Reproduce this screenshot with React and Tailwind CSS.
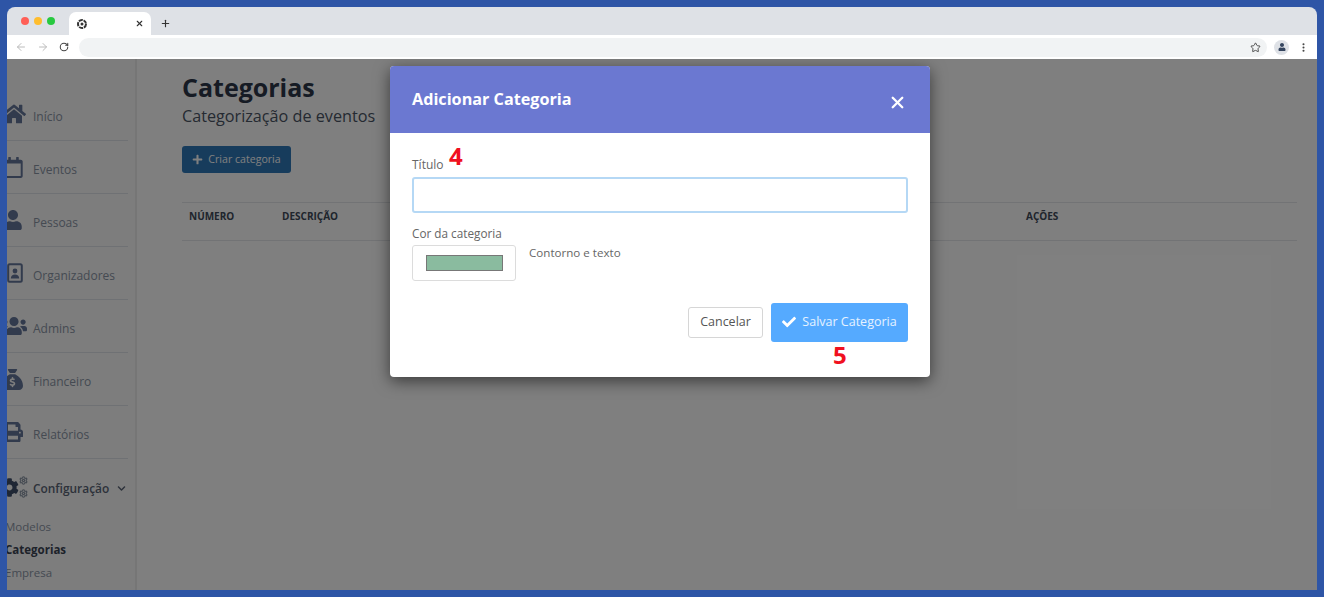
import React from "react";
import { FaHome, FaRegCalendar, FaUser, FaUsers, FaPrint, FaCog, FaPlus, FaCheck, FaChevronDown } from "react-icons/fa";
import { FaSackDollar } from "react-icons/fa6";
import { ArrowLeft, ArrowRight, RotateCw, Star, X, Plus, MoreVertical, Settings } from "lucide-react";

const font = { fontFamily: '"Open Sans", sans-serif' };

function ContactIcon({ className }) {
  return (
    <svg viewBox="0 0 16 20" className={className} fill="none">
      <rect x="1.2" y="1.2" width="13.6" height="17.6" rx="1.5" stroke="currentColor" strokeWidth="2" />
      <circle cx="8" cy="8" r="2.4" fill="currentColor" />
      <path d="M3.8 15.5c0-2.6 1.8-4 4.2-4s4.200 1.400 4.200 4z" fill="currentColor" />
    </svg>
  );
}

const items = [
  { label: "Início", Icon: FaHome, size: "w-[24px] h-[24px]", ml: "-ml-[5px]" },
  { label: "Eventos", Icon: FaRegCalendar, size: "w-[21px] h-[21px]", ml: "-ml-[4px]" },
  { label: "Pessoas", Icon: FaUser, size: "w-[20px] h-[20px]", ml: "-ml-[4px]" },
  { label: "Organizadores", Icon: ContactIcon, size: "w-[16px] h-[20px]", ml: "ml-[0px]" },
  { label: "Admins", Icon: FaUsers, size: "w-[26px] h-[22px]", ml: "-ml-[6px]" },
  { label: "Financeiro", Icon: FaSackDollar, size: "w-[21px] h-[21px]", ml: "-ml-[5px]" },
  { label: "Relatórios", Icon: FaPrint, size: "w-[20px] h-[20px]", ml: "-ml-[4px]" },
];

function Sidebar() {
  return (
    <aside className="w-[130px] shrink-0 bg-[#fafafa] border-r-2 border-[#ececec] pt-[29px] overflow-hidden">
      {items.map(({ label, Icon, size, ml }) => (
        <div key={label} className="h-[53px] border-b border-[#dfe3e8] mr-[7px] flex items-center text-[#64769a]">
          <span className="w-[26px] shrink-0 flex items-center"><Icon className={`${size} ${ml} shrink-0`} /></span>
          <span className="mt-[5px] text-[12px] text-[#8a95a5]">{label}</span>
        </div>
      ))}
      <div className="h-[56px] flex items-center text-[#3f4f6b]">
        <span className="relative w-[26px] h-[24px] shrink-0">
          <FaCog className="absolute -left-[7px] top-[3px] w-[19px] h-[19px]" />
          <Settings className="absolute left-[12px] top-[1px] w-[9px] h-[9px] text-[#8a95a5]" strokeWidth={3} />
          <Settings className="absolute left-[12px] top-[14px] w-[9px] h-[9px] text-[#8a95a5]" strokeWidth={3} />
        </span>
        <span className="mt-[3px] text-[11.9px] font-semibold text-[#5a6576]">Configuração</span>
        <FaChevronDown className="mt-[3px] w-[9px] h-[9px] ml-[8px] text-[#5a6576]" />
      </div>
      <ul className="-ml-[2px] text-[11.5px]">
        <li className="h-[23px] leading-[23px] text-[#8a95a5]">Modelos</li>
        <li className="h-[23px] leading-[23px] font-bold text-[#3a4454]">Categorias</li>
        <li className="h-[23px] leading-[23px] text-[#8a95a5]">Empresa</li>
      </ul>
    </aside>
  );
}

function MainArea() {
  return (
    <main className="flex-1 bg-white pl-[45px] pr-[20px] pt-[11px]">
      <h1 className="text-[25px] leading-[34px] font-bold text-[#2c3648]">Categorias</h1>
      <p className="text-[16.2px] leading-[24px] text-[#4a5464]">Categorização de eventos</p>
      <button className="mt-[18px] w-[109px] h-[27px] rounded-[3px] bg-[#2f78b8] text-white text-[10.6px] flex items-center justify-center gap-[5px]">
        <FaPlus className="w-[11px] h-[11px]" />
        Criar categoria
      </button>
      <div className="mt-[29px] h-[39px] border-y border-[#e5e7eb] grid grid-cols-[93px_744px_1fr] items-start pt-[6px] pl-[7px] text-[10px] font-bold text-[#3f4a5a]">
        <span>NÚMERO</span>
        <span>DESCRIÇÃO</span>
        <span>AÇÕES</span>
      </div>
    </main>
  );
}

function Modal() {
  return (
    <div className="absolute left-[383px] top-[7px] w-[540px] h-[311px] bg-white rounded-[4px] shadow-[0_4px_16px_rgba(0,0,0,0.55)] overflow-hidden">
      <div className="h-[67px] bg-[#6b78d1] flex items-center justify-between pl-[22px] pr-[23px]">
        <h2 className="text-[16.2px] font-bold text-white">Adicionar Categoria</h2>
        <X className="w-[19px] h-[19px] text-white mt-[6px]" strokeWidth={3} />
      </div>
      <div className="relative px-[22px] pt-[23px]">
        <label className="block text-[12px] leading-[18px] text-[#666]">Título</label>
        <span className="absolute left-[59px] top-[7px] text-[24px] leading-[32px] font-bold text-[#f01020]">4</span>
        <div className="mt-[3px] h-[36px] rounded-[3px] border-2 border-[#b5d8f5] bg-white" />
        <label className="block mt-[11px] text-[11.75px] leading-[18px] text-[#666]">Cor da categoria</label>
        <div className="flex mt-[3px]">
          <div className="w-[104px] h-[36px] rounded-[3px] border border-[#dcdcdc] flex items-center justify-center">
            <div className="w-[77px] h-[16px] bg-[#8abb9f] border border-[#777]" />
          </div>
          <span className="ml-[13px] -mt-[1px] text-[11.6px] leading-[18px] text-[#666]">Contorno e texto</span>
        </div>
        <div className="flex justify-end items-center gap-[8px] mt-[22px]">
          <button className="w-[75px] h-[31px] rounded-[3px] border border-[#d6d6d6] bg-white text-[12.5px] text-[#555]">Cancelar</button>
          <button className="w-[137px] h-[39px] rounded-[3px] bg-[#55aaff] text-[12.5px] text-white/85 flex items-center justify-center gap-[6px]">
            <FaCheck className="w-[14px] h-[14px] text-white -mt-[1px]" />
            Salvar Categoria
          </button>
        </div>
        <span className="absolute left-[443px] top-[206px] text-[24px] leading-[32px] font-bold text-[#f01020]">5</span>
      </div>
    </div>
  );
}

function Chrome() {
  return (
    <>
      <div className="h-[28px] bg-[#dee1e6] flex items-end rounded-t-[8px] pl-[62px]">
        <div className="absolute left-[14px] top-[10px] flex gap-[5px]">
          <span className="w-[8px] h-[8px] rounded-full bg-[#ff5f57]" />
          <span className="w-[8px] h-[8px] rounded-full bg-[#ffbd2e]" />
          <span className="w-[8px] h-[8px] rounded-full bg-[#28c940]" />
        </div>
        <div className="w-[82px] h-[23px] bg-white rounded-t-[7px] flex items-center justify-between pl-[8px] pr-[7px]">
          <svg viewBox="0 0 12 12" className="w-[10px] h-[10px]">
            <circle cx="6" cy="6" r="4.8" fill="none" stroke="#333" strokeWidth="2.4" strokeDasharray="5 1" />
            <circle cx="6" cy="6" r="1.8" fill="#333" />
          </svg>
          <X className="w-[9px] h-[9px] text-[#333]" strokeWidth={3} />
        </div>
        <Plus className="w-[11px] h-[11px] text-[#333] ml-[9px] mb-[6px]" strokeWidth={2.5} />
      </div>
      <div className="h-[24px] bg-white flex items-center pl-[8px] pr-[8px]">
        <ArrowLeft className="w-[12px] h-[12px] text-[#bcbcbc]" />
        <ArrowRight className="w-[12px] h-[12px] text-[#bcbcbc] ml-[10px]" />
        <RotateCw className="w-[10px] h-[10px] text-[#444] ml-[10px]" strokeWidth={2.5} />
        <div className="ml-[10px] flex-1 h-[19px] rounded-full bg-[#f1f3f4] flex items-center justify-end pr-[6px]">
          <Star className="w-[11px] h-[11px] text-[#444]" strokeWidth={2} />
        </div>
        <div className="ml-[7px] w-[15px] h-[15px] rounded-full bg-[#dee1e6] flex items-center justify-center">
          <FaUser className="w-[8px] h-[8px] text-[#34445e]" />
        </div>
        <MoreVertical className="w-[11px] h-[11px] text-[#444] ml-[9px]" strokeWidth={2.5} />
      </div>
    </>
  );
}

export default function App() {
  return (
    <div className="w-[1324px] h-[597px] bg-[#2e55a6] p-[7px] overflow-hidden" style={font}>
      <div className="relative h-[583px] flex flex-col">
        <Chrome />
        <div className="relative flex-1 flex overflow-hidden">
          <Sidebar />
          <MainArea />
          <div className="absolute inset-0 bg-black/50" />
          <Modal />
        </div>
      </div>
    </div>
  );
}
